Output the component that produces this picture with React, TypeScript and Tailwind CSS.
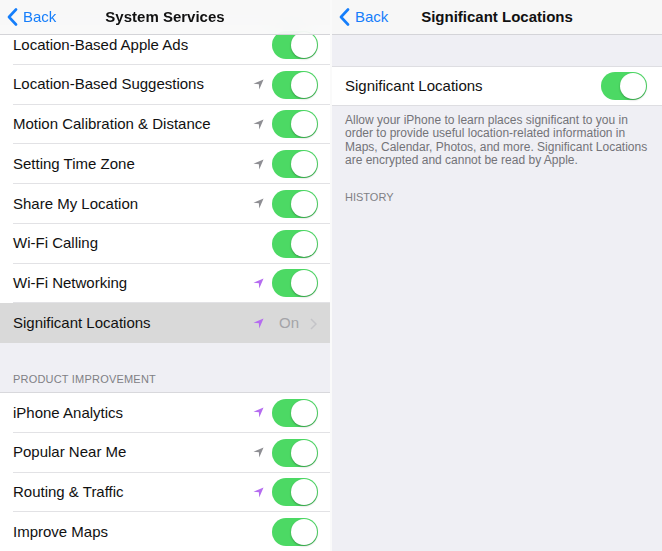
import React from "react";

type Arrow = "gray" | "purple" | null;

interface Row {
  label: string;
  arrow: Arrow;
}

const SYSTEM_ROWS: Row[] = [
  { label: "Location-Based Apple Ads", arrow: null },
  { label: "Location-Based Suggestions", arrow: "gray" },
  { label: "Motion Calibration & Distance", arrow: "gray" },
  { label: "Setting Time Zone", arrow: "gray" },
  { label: "Share My Location", arrow: "gray" },
  { label: "Wi-Fi Calling", arrow: null },
  { label: "Wi-Fi Networking", arrow: "purple" },
];

const IMPROVEMENT_ROWS: Row[] = [
  { label: "iPhone Analytics", arrow: "purple" },
  { label: "Popular Near Me", arrow: "gray" },
  { label: "Routing & Traffic", arrow: "purple" },
  { label: "Improve Maps", arrow: null },
];

const font = { fontFamily: '"Liberation Sans", Arial, sans-serif' };

function LocationArrow({ color }: { color: "gray" | "purple" }) {
  return (
    <svg width="11" height="11" viewBox="0 0 12 12" className="shrink-0">
      <polygon
        points="11.5,0.5 0.5,5.2 6.4,5.6 6.8,11.5"
        fill={color === "purple" ? "#b56cf0" : "#8e8e93"}
      />
    </svg>
  );
}

function Toggle() {
  return (
    <div className="relative h-[28px] w-[46px] shrink-0 rounded-full bg-[#4cd964]">
      <div className="absolute right-[1px] top-[1px] h-[26px] w-[26px] rounded-full bg-white shadow-[0_1px_2px_rgba(0,0,0,0.3)]" />
    </div>
  );
}

function BackChevron() {
  return (
    <svg width="11" height="18" viewBox="0 0 11 18" className="shrink-0">
      <path d="M9 1.5 L2 9 L9 16.5" fill="none" stroke="#157efb" strokeWidth="2.6" strokeLinecap="round" strokeLinejoin="round" />
    </svg>
  );
}

function NavBar({ title }: { title: string }) {
  return (
    <div className="relative flex h-[35px] items-center justify-center border-b border-[#d4d4d8]">
      <div className="absolute left-[7px] top-0 flex h-full items-center gap-[5px]">
        <BackChevron />
        <span className="text-[15px] text-[#157efb]">Back</span>
      </div>
      <span className="text-[15px] font-bold text-[#111]">{title}</span>
    </div>
  );
}

function SettingRow({ row }: { row: Row }) {
  return (
    <div className="flex h-[39.75px] bg-white pl-[13px]">
      <div className="flex flex-1 items-center border-b border-[#e2e2e5] pr-[12px] pt-[1px]">
        <span className="flex-1 text-[15px] text-[#111]">{row.label}</span>
        {row.arrow && (
          <span className="mr-[8px]">
            <LocationArrow color={row.arrow} />
          </span>
        )}
        <Toggle />
      </div>
    </div>
  );
}

function SystemServices() {
  return (
    <div className="relative h-[551px] w-[330px] shrink-0 overflow-hidden bg-[#efeff4]">
      <div className="absolute inset-x-0 top-0 z-10 bg-[#f8f8f8]/90 backdrop-blur-md">
        <NavBar title="System Services" />
      </div>
      <div className="pt-[25px]">
        {SYSTEM_ROWS.map((row) => (
          <SettingRow key={row.label} row={row} />
        ))}
        <div className="flex h-[39.75px] items-center bg-[#d9d9d9] pl-[13px] pr-[13px] pt-[1px]">
          <span className="flex-1 text-[15px] text-[#111]">Significant Locations</span>
          <span className="mr-[15px]">
            <LocationArrow color="purple" />
          </span>
          <span className="mr-[11px] text-[15px] text-[#a4a4a8]">On</span>
          <svg width="7" height="12" viewBox="0 0 7 12">
            <path d="M1 1 L6 6 L1 11" fill="none" stroke="#c4c4c8" strokeWidth="1.5" />
          </svg>
        </div>
        <div className="flex h-[49px] items-end pb-[6px] pl-[13px]">
          <span className="text-[11px] leading-[13px] tracking-[0.2px] text-[#808085]">PRODUCT IMPROVEMENT</span>
        </div>
        <div className="border-t border-[#d8d8dc]">
          {IMPROVEMENT_ROWS.map((row) => (
            <SettingRow key={row.label} row={row} />
          ))}
        </div>
      </div>
    </div>
  );
}

function SignificantLocations() {
  return (
    <div className="flex h-[551px] flex-1 flex-col bg-[#efeff4]">
      <div className="bg-[#f7f7f7]">
        <NavBar title="Significant Locations" />
      </div>
      <div className="h-[31px]" />
      <div className="flex h-[40px] items-center border-y border-[#dedee2] bg-white pl-[13px] pr-[15px]">
        <span className="flex-1 text-[15px] text-[#111]">Significant Locations</span>
        <Toggle />
      </div>
      <p className="pl-[13px] pt-[8px] text-[12px] leading-[13.3px] text-[#737378]">
        Allow your iPhone to learn places significant to you in
        <br />
        order to provide useful location-related information in
        <br />
        Maps, Calendar, Photos, and more. Significant Locations
        <br />
        are encrypted and cannot be read by Apple.
      </p>
      <p className="mt-[24px] pl-[13px] text-[11px] leading-[13px] text-[#808085]">HISTORY</p>
    </div>
  );
}

export default function App() {
  return (
    <div className="flex h-[551px] w-[662px] overflow-hidden bg-white" style={font}>
      <SystemServices />
      <div className="w-[2px] shrink-0 bg-[#fafafa]" />
      <SignificantLocations />
    </div>
  );
}
